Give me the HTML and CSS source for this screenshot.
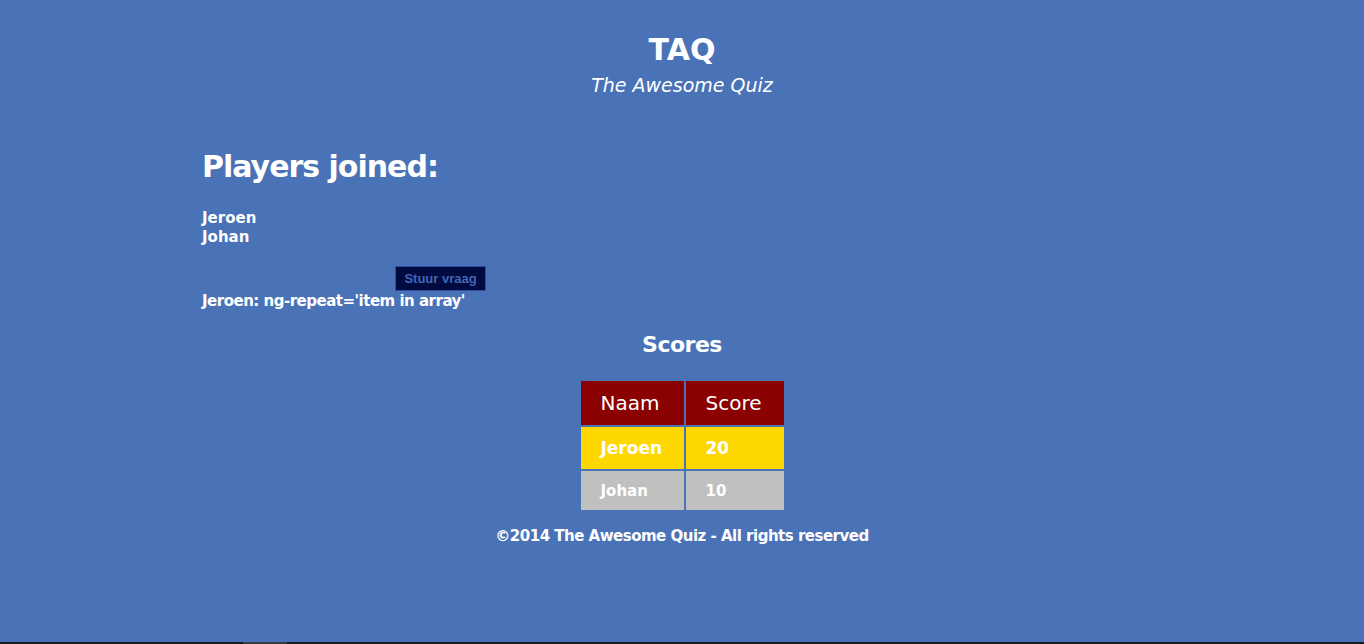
FILE: index.html
```html
<!DOCTYPE html>
<html>
<head>
<meta charset="utf-8">
<title>TAQ</title>
<link rel="stylesheet" href="styles.css">
</head>
<body>
<header class="site-header">
  <h1 class="logo">TAQ</h1>
  <p class="tagline">The Awesome Quiz</p>
</header>
<main class="container">
  <h2 class="players-title">Players joined:</h2>
  <ul class="players">
    <li>Jeroen</li>
    <li>Johan</li>
  </ul>
  <form class="ask">
    <button type="button" class="btn-ask">Stuur vraag</button>
  </form>
  <p class="answer">Jeroen: ng-repeat='item in array'</p>
  <section class="scores">
    <h3 class="scores-title">Scores</h3>
    <table class="score-table">
      <thead>
        <tr><th>Naam</th><th>Score</th></tr>
      </thead>
      <tbody>
        <tr class="first"><td>Jeroen</td><td>20</td></tr>
        <tr class="second"><td>Johan</td><td>10</td></tr>
      </tbody>
    </table>
  </section>
</main>
<footer class="site-footer">©2014 The Awesome Quiz - All rights reserved</footer>
<div class="scrollbar"></div>
</body>
</html>
```
FILE: styles.css
```css
html, body {
  margin: 0;
  padding: 0;
  background: #4a72b7;
  color: #ffffff;
  font-family: "DejaVu Sans", "Open Sans", sans-serif;
}
body {
  min-height: 644px;
}
.site-header {
  padding-top: 30px;
  text-align: center;
}
.logo {
  margin: 0;
  font-size: 30px;
  line-height: 40px;
  font-weight: 700;
}
.tagline {
  margin: 3px 0 0;
  font-size: 19px;
  line-height: 24px;
  font-style: italic;
  font-weight: 400;
}
.container {
  width: 960px;
  margin: 0 auto;
  padding-top: 50px;
}
.players-title {
  margin: 0;
  font-size: 30px;
  line-height: 40px;
  font-weight: 700;
  letter-spacing: -1px;
}
.players {
  list-style: none;
  margin: 22px 0 0;
  padding: 0;
  font-size: 15px;
  line-height: 19px;
  font-weight: 700;
}
.ask {
  margin: 19px 0 0 193px;
}
.btn-ask {
  display: block;
  width: 91px;
  height: 25px;
  padding: 0;
  background: #020b40;
  border: 1px solid #2b4da3;
  color: #4166b8;
  font-family: "Liberation Sans", Arial, sans-serif;
  font-weight: 700;
  font-size: 13px;
}
.answer {
  margin: 1px 0 0;
  font-size: 15px;
  line-height: 19px;
  font-weight: 700;
  letter-spacing: -0.5px;
}
.scores {
  text-align: center;
}
.scores-title {
  margin: 19px 0 0;
  font-size: 22px;
  line-height: 30px;
  font-weight: 700;
  letter-spacing: -0.5px;
}
.score-table {
  margin: 19px auto 0;
  border-collapse: separate;
  border-spacing: 2px;
  text-align: left;
}
.score-table th,
.score-table td {
  padding: 0 0 0 20px;
  vertical-align: middle;
}
.score-table th {
  background: #8b0000;
  height: 44px;
  font-size: 20px;
  font-weight: 400;
}
.score-table th:first-child { width: 83px; }
.score-table th:last-child { width: 78px; }
.score-table .first td {
  background: #ffd700;
  height: 42px;
  font-size: 17px;
  font-weight: 700;
}
.score-table .second td {
  background: #c0c0c0;
  height: 39px;
  font-size: 15px;
  font-weight: 700;
}
.site-footer {
  margin-top: 15px;
  text-align: center;
  font-size: 15px;
  line-height: 19px;
  font-weight: 700;
  letter-spacing: -0.5px;
}
.scrollbar {
  position: fixed;
  left: 0;
  right: 0;
  bottom: 0;
  height: 2px;
  background: linear-gradient(to right, #17191d 0, #17191d 243px, #3a3b3f 243px, #3a3b3f 287px, #17191d 287px);
}
```
